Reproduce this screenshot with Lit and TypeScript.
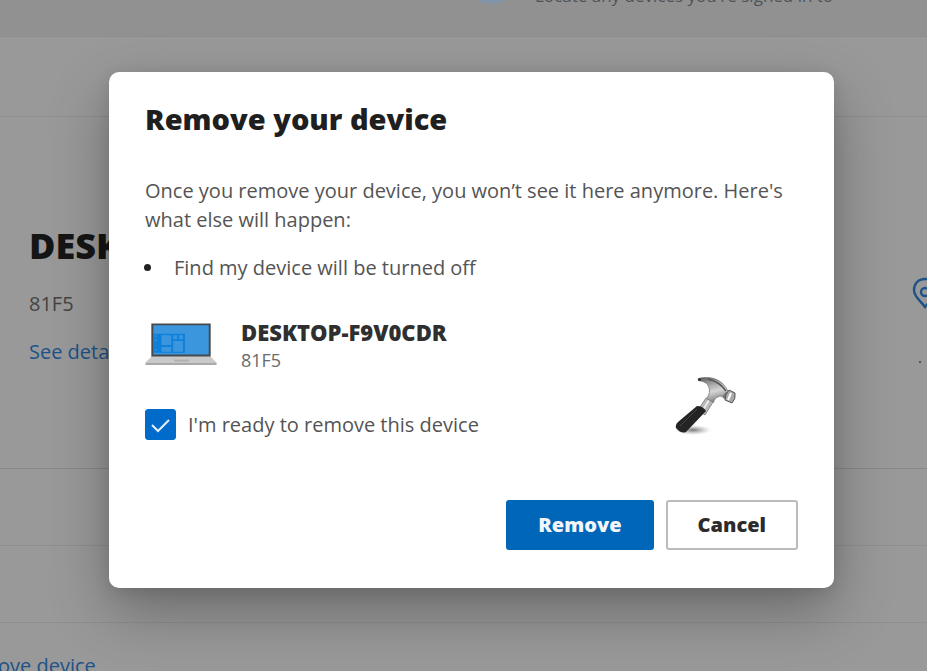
import { LitElement, html, css } from "lit";
import { customElement, state } from "lit/decorators.js";

@customElement("laptop-icon")
class LaptopIcon extends LitElement {
  static styles = css`
    :host { display: block; line-height: 0; }
  `;
  render() {
    return html`<svg width="72" height="46" viewBox="0 0 74 46" aria-hidden="true">
      <path d="M6.5 1h61v34h-61z" fill="#46494c" />
      <path d="M8.5 2.8h57v30h-57z" fill="#3c96de" />
      <path d="M8.5 11.5h32.5v19.5h-32.5z" fill="#0f80da" />
      <path d="M17 13h10v10H17zM17 25h10v5H17zM29 13h4v4h-4zM35 13h4v4h-4zM29 19h10v11H29z" fill="#3c96de" />
      <path d="M10 13h2v2h-2zM10 17h2v2h-2zM10 27h2v2h-2z" fill="#3590dc" />
      <path d="M6.5 35h61l6 6H.5z" fill="#c9c9c9" />
      <path d="M.5 41h73v2.5H.5z" fill="#a9a9a9" />
      <path d="M30 38h15v2H30z" fill="#b0b0b0" />
    </svg>`;
  }
}

@customElement("hammer-icon")
class HammerIcon extends LitElement {
  static styles = css`
    :host { display: block; line-height: 0; }
  `;
  render() {
    return html`<svg width="64" height="60" viewBox="0 0 64 60" aria-hidden="true">
      <defs>
        <linearGradient id="steel" x1="0" y1="0" x2="0.3" y2="1">
          <stop offset="0" stop-color="#555" />
          <stop offset="0.3" stop-color="#999" />
          <stop offset="0.65" stop-color="#d6d6d6" />
          <stop offset="1" stop-color="#8a8a8a" />
        </linearGradient>
        <radialGradient id="shade">
          <stop offset="0" stop-color="#555" stop-opacity="0.8" />
          <stop offset="1" stop-color="#999" stop-opacity="0" />
        </radialGradient>
      </defs>
      <ellipse cx="20" cy="53" rx="18" ry="5" fill="url(#shade)" />
      <path d="M33 21l7 4-8 13-7-5z" fill="#b9b9b9" stroke="#777" stroke-width="0.8" />
      <path d="M36 23l-7 12" stroke="#e8e8e8" stroke-width="2" />
      <path d="M25.5 1.5c7-2 15-1 20 2 5 3 9 8 9.500 12l-4 4c-4-1-9 0-10.500 6l-7-4c3-4 4-8 2-12-1-3-4-5-10-6z" fill="url(#steel)" stroke="#777" stroke-width="0.8" />
      <path d="M35 2q12 3 18 12" fill="none" stroke="#555" stroke-width="1.5" />
      <circle cx="26.5" cy="2.5" r="1.600" fill="#333" />
      <path d="M49 20l4-5 4 2-3 7z" fill="#777" />
      <path d="M56 13l6 3q1 6-3 10l-7-3q0-6 4-10z" fill="#aaa" stroke="#555" stroke-width="1" />
      <path d="M58 16l-3 7" stroke="#fff" stroke-width="2" />
      <path d="M24 29q6 0 9 5L13 55q-5 2-10-4-1-3 2-6z" fill="#242424" />
      <path d="M24 32L7 49" stroke="#444" stroke-width="1" />
    </svg>`;
  }
}

@customElement("app-root")
class AppRoot extends LitElement {
  static styles = css`
    :host {
      display: block;
      position: relative;
      min-height: 100vh;
      overflow: hidden;
      background: #999;
      color: #545454;
      font: 20px/30px "Open Sans", "Noto Sans", sans-serif;
    }
    * { box-sizing: border-box; }
    h1, h2, p, ul { margin: 0; padding: 0; }
    .page { height: 100vh; overflow: hidden; }
    .banner {
      display: flex;
      align-items: flex-end;
      gap: 14px;
      height: 37px;
      padding: 0 0 32px 461px;
      background: #919191;
      border-bottom: 1px solid #8d8d8d;
      font-size: 17px;
      line-height: 16px;
      white-space: nowrap;
      color: #4f5357;
      overflow: hidden;
    }
    .dot { width: 60px; height: 60px; flex: none; border-radius: 50%; background: #8295a6; }
    .dot:last-child { margin: 0 -42px 0 auto; }
    .row { border-bottom: 1px solid #8f8f8f; }
    .bar { height: 80px; }
    .slim { height: 77px; }
    .device {
      display: flex;
      justify-content: space-between;
      height: 352px;
      padding: 106px 0 0 29px;
      border-bottom: 1px solid #888;
    }
    .name { font-size: 36px; line-height: 46px; font-weight: 800; color: #151515; }
    .model { margin-top: 20px; color: #444; }
    .device a { display: block; margin-top: 18px; }
    a { color: #1d5288; text-decoration: none; }
    .map { flex: none; width: 15px; margin-top: 54px; }
    .map svg { display: block; overflow: hidden; }
    .speck { display: block; width: 2px; height: 2px; margin: 52px 0 0 7px; background: #555; }
    .foot { display: flex; padding: 28px 0 0; }
    .foot a { margin-left: -44px; white-space: nowrap; }
    .overlay { position: absolute; inset: 0; padding: 72px 93px 83px 109px; }
    .dialog {
      padding: 27px 36px 38px;
      border-radius: 10px;
      background: #fff;
      box-shadow: 0 24px 60px rgba(0, 0, 0, 0.3), 0 4px 16px rgba(0, 0, 0, 0.1);
    }
    .title { font-size: 29px; line-height: 40px; font-weight: 800; color: #1f1f1f; }
    .lead { margin-top: 37px; line-height: 29px; }
    .list { margin-top: 19px; padding-left: 20px; }
    .list li { padding-left: 9px; }
    .list li::marker { color: #222; }
    .machine { display: flex; align-items: center; gap: 24px; margin-top: 34px; }
    .machine h2 { font-size: 22px; line-height: 30px; font-weight: 800; color: #2f2f2f; }
    .machine p { font-size: 18px; line-height: 26px; color: #6a6a6a; }
    .ready { display: flex; justify-content: space-between; align-items: flex-start; margin-top: 4px; }
    .check { display: flex; align-items: center; gap: 12px; margin-top: 32px; }
    .tick { display: grid; width: 31px; height: 31px; }
    .tick input, .tick svg { grid-area: 1 / 1; margin: 0; width: 31px; height: 31px; }
    .tick input { appearance: none; border: 1px solid #777; border-radius: 3px; }
    .tick input:checked { background: #006bcb; border-color: #006bcb; }
    .tick svg { pointer-events: none; }
    .ready hammer-icon { margin-right: 61px; }
    .actions { display: flex; justify-content: flex-end; gap: 12px; margin-top: 60px; }
    button {
      height: 50px;
      padding: 0 30px;
      border: 2px solid #bbb;
      border-radius: 3px;
      background: #fff;
      color: #2b2b2b;
      font: 800 20px/28px "Open Sans", "Noto Sans", sans-serif;
    }
    .primary { border-color: #0067b8; background: #0067b8; color: #f2f6fa; }
  `;

  @state() ready = true;

  render() {
    return html`
      <div class="page">
        <div class="banner"><span class="dot"></span><span>Locate any devices you're signed in to</span><span class="dot"></span></div>
        <div class="row bar"></div>
        <div class="device">
          <div>
            <h2 class="name">DESKTOP-F9V0CDR</h2>
            <p class="model">81F5</p>
            <a href="#details">See details</a>
          </div>
          <div class="map">
            <svg width="15" height="32" viewBox="0 0 15 32" aria-hidden="true">
              <path d="M13 2C6 2 2 7 2 13c0 7 6 10 11 17 5-7 11-10 11-17C24 7 20 2 13 2z" fill="none" stroke="#1d5288" stroke-width="2.4" />
              <circle cx="13" cy="15" r="4" fill="none" stroke="#1d5288" stroke-width="2.4" />
            </svg>
            <span class="speck"></span>
          </div>
        </div>
        <div class="row slim"></div>
        <div class="row slim"></div>
        <div class="foot"><a href="#remove">Remove device</a></div>
      </div>
      <div class="overlay">
        <section class="dialog" role="dialog" aria-labelledby="title">
          <h1 class="title" id="title">Remove your device</h1>
          <p class="lead">Once you remove your device, you won’t see it here anymore. Here's what else will happen:</p>
          <ul class="list"><li>Find my device will be turned off</li></ul>
          <div class="machine">
            <laptop-icon></laptop-icon>
            <div><h2>DESKTOP-F9V0CDR</h2><p>81F5</p></div>
          </div>
          <div class="ready">
            <label class="check">
              <span class="tick">
                <input type="checkbox" .checked=${this.ready} @change=${(e: Event) => (this.ready = (e.target as HTMLInputElement).checked)} />
                <svg viewBox="0 0 31 31" aria-hidden="true"><path d="M7 16l6 6L24 11" fill="none" stroke="#e4eefa" stroke-width="2" /></svg>
              </span>
              I'm ready to remove this device
            </label>
            <hammer-icon></hammer-icon>
          </div>
          <div class="actions">
            <button class="primary" type="button">Remove</button>
            <button type="button">Cancel</button>
          </div>
        </section>
      </div>
    `;
  }
}
